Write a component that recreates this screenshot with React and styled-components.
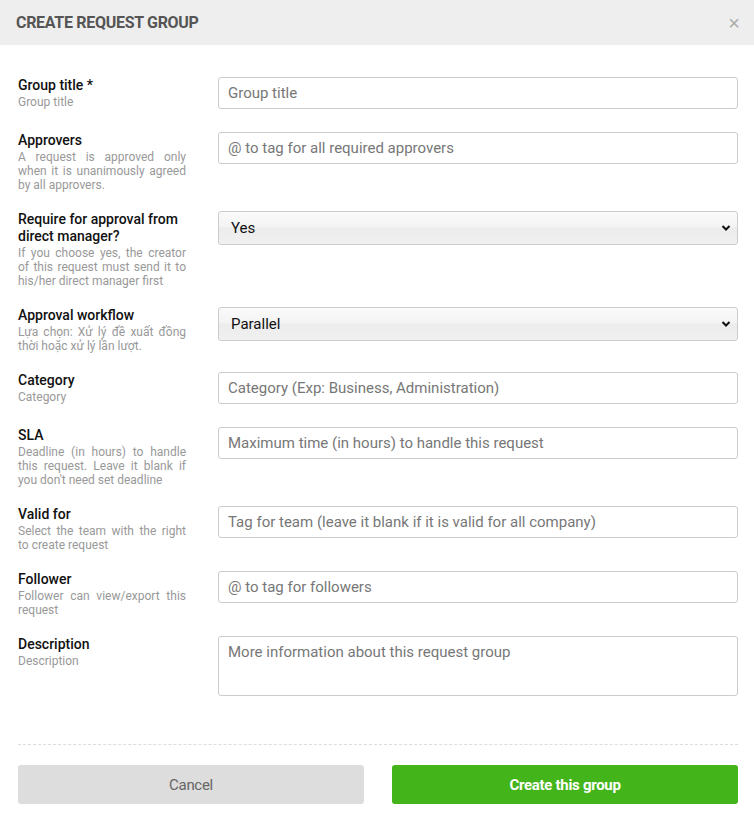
import React from "react";
import styled, { createGlobalStyle } from "styled-components";

const Global = createGlobalStyle`
  html, body { margin: 0; padding: 0; background: #fff; }
  body { font-family: Roboto, "Noto Sans", Arial, sans-serif; }
  * { box-sizing: border-box; }
`;

const Modal = styled.div`
  width: 754px;
  min-height: 826px;
  background: #fff;
  display: flex;
  flex-direction: column;
`;

const Header = styled.div`
  height: 45px;
  background: #eeeeee;
  display: flex;
  align-items: center;
  justify-content: space-between;
  padding: 0 14px 0 16px;
`;

const Title = styled.h1`
  margin: 0;
  font-size: 16px;
  font-weight: 700;
  color: #555;
  text-transform: uppercase;
  letter-spacing: -0.3px;
`;

const Close = styled.button`
  border: 0;
  background: none;
  padding: 0;
  color: #aaa;
  font-size: 20px;
  line-height: 1;
  font-family: Arial, sans-serif;
  cursor: pointer;
`;

const Body = styled.div`
  padding: 32px 16px 0 18px;
`;

const Row = styled.div`
  display: grid;
  grid-template-columns: 168px 1fr;
  column-gap: 32px;
  margin-bottom: 19px;
`;

const LabelBox = styled.div`
  display: flex;
  flex-direction: column;
`;

const LabelTitle = styled.div`
  font-size: 14px;
  font-weight: 500;
  color: #111;
  line-height: 17px;
`;

const LabelSub = styled.div`
  margin-top: 1px;
  font-size: 12px;
  color: #999;
  line-height: 14px;
  text-align: justify;
`;

const Field = styled.div`
  position: relative;
  padding-bottom: ${(p) => (p.$last ? 0 : 4)}px;
`;

const Input = styled.input`
  width: 100%;
  height: 32px;
  border: 1px solid #ccc;
  border-radius: 3px;
  padding: 0 9px;
  font-family: Roboto, Arial, sans-serif;
  font-size: 15px;
  color: #333;
  outline: none;
  &::placeholder { color: #777; }
`;

const TextArea = styled.textarea`
  width: 100%;
  height: 60px;
  border: 1px solid #ccc;
  border-radius: 3px;
  padding: 6px 9px;
  font-family: Roboto, Arial, sans-serif;
  font-size: 15px;
  color: #333;
  resize: none;
  outline: none;
  display: block;
  &::placeholder { color: #777; }
`;

const Select = styled.select`
  width: 100%;
  height: 34px;
  border: 1px solid #ccc;
  border-radius: 3px;
  padding: 0 30px 0 12px;
  font-family: Roboto, Arial, sans-serif;
  font-size: 15px;
  color: #111;
  appearance: none;
  -webkit-appearance: none;
  background: linear-gradient(#fafafa 0%, #f4f4f4 45%, #ececec 50%, #f0f0f0 100%);
  outline: none;
  display: block;
`;

const Chevron = styled.svg`
  position: absolute;
  right: 7px;
  top: 13px;
  width: 10px;
  height: 8px;
  pointer-events: none;
`;

const Divider = styled.div`
  margin: 29px 16px 0 18px;
  border-top: 1px dashed #ddd;
`;

const Footer = styled.div`
  display: grid;
  grid-template-columns: 1fr 1fr;
  column-gap: 28px;
  padding: 20px 16px 0 18px;
`;

const Button = styled.button`
  height: 39px;
  border: 0;
  border-radius: 3px;
  font-family: Roboto, Arial, sans-serif;
  font-size: 15px;
  letter-spacing: -0.3px;
  background: ${(p) => (p.$primary ? "#43b51a" : "#dddddd")};
  color: ${(p) => (p.$primary ? "#fff" : "#666")};
  font-weight: ${(p) => (p.$primary ? 700 : 400)};
  cursor: pointer;
`;

const ChevronIcon = () => (
  <Chevron viewBox="0 0 10 8">
    <path d="M1.5 2 L5 5.5 L8.5 2" fill="none" stroke="#111" strokeWidth="2" />
  </Chevron>
);

const rows = [
  { title: "Group title *", sub: "Group title", type: "input", ph: "Group title" },
  {
    title: "Approvers",
    sub: "A request is approved only when it is unanimously agreed by all approvers.",
    type: "input",
    ph: "@ to tag for all required approvers",
  },
  {
    title: "Require for approval from direct manager?",
    sub: "If you choose yes, the creator of this request must send it to his/her direct manager first",
    type: "select",
    options: ["Yes", "No"],
  },
  {
    title: "Approval workflow",
    sub: "Lựa chọn: Xử lý đề xuất đồng thời hoặc xử lý lần lượt.",
    type: "select",
    options: ["Parallel", "Sequential"],
  },
  { title: "Category", sub: "Category", type: "input", ph: "Category (Exp: Business, Administration)" },
  {
    title: "SLA",
    sub: "Deadline (in hours) to handle this request. Leave it blank if you don't need set deadline",
    type: "input",
    ph: "Maximum time (in hours) to handle this request",
  },
  {
    title: "Valid for",
    sub: "Select the team with the right to create request",
    type: "input",
    ph: "Tag for team (leave it blank if it is valid for all company)",
  },
  {
    title: "Follower",
    sub: "Follower can view/export this request",
    type: "input",
    ph: "@ to tag for followers",
  },
  {
    title: "Description",
    sub: "Description",
    type: "textarea",
    ph: "More information about this request group",
  },
];

export default function App() {
  return (
    <>
      <Global />
      <Modal>
        <Header>
          <Title>Create request group</Title>
          <Close aria-label="Close">×</Close>
        </Header>
        <Body>
          {rows.map((r, i) => (
            <Row key={i}>
              <LabelBox>
                <LabelTitle>{r.title}</LabelTitle>
                <LabelSub>{r.sub}</LabelSub>
              </LabelBox>
              <Field $last={r.type === "textarea"}>
                {r.type === "input" && <Input placeholder={r.ph} />}
                {r.type === "textarea" && <TextArea placeholder={r.ph} />}
                {r.type === "select" && (
                  <>
                    <Select defaultValue={r.options[0]}>
                      {r.options.map((o) => (
                        <option key={o}>{o}</option>
                      ))}
                    </Select>
                    <ChevronIcon />
                  </>
                )}
              </Field>
            </Row>
          ))}
        </Body>
        <Divider />
        <Footer>
          <Button>Cancel</Button>
          <Button $primary>Create this group</Button>
        </Footer>
      </Modal>
    </>
  );
}
